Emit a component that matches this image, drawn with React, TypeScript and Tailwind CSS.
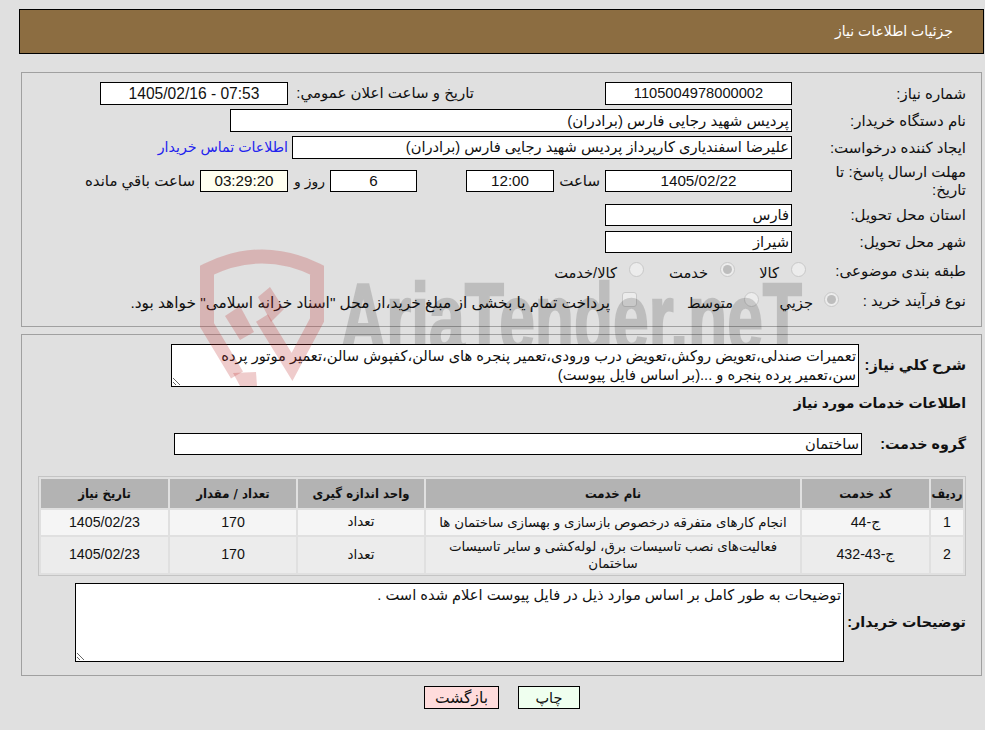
const Box = ({ w, children, center, bg, short, className }: { w: string; children?: React.ReactNode; center?: boolean; bg?: string; short?: boolean; className?: string }) => (
  <div className={`${w} ${bg ?? "bg-white"} ${center ? "text-center" : "text-right pr-[2px]"} ${short ? "h-[22px] leading-[20px]" : "h-[23px] leading-[21px]"} shrink-0 border border-black whitespace-nowrap overflow-hidden ${className ?? ""}`}>
    {children}
  </div>
);

const Label = ({ children }: { children: React.ReactNode }) => (
  <div className="w-[174px] shrink-0 pl-[8px] text-[15px] leading-[18px]">{children}</div>
);

const Radio = ({ on }: { on?: boolean }) => (
  <span className="relative top-[-2px] inline-flex h-[15px] w-[15px] shrink-0 items-center justify-center rounded-full border border-[#c8c8c8] bg-[#ececec]">
    {on && <span className="h-[9px] w-[9px] rounded-full bg-[#bdbdbd]" />}
  </span>
);

const rows = [
  { n: "1", code: "ج-44", name: "انجام کارهای متفرقه درخصوص بازسازی و بهسازی ساختمان ها", h: "h-[25px]" },
  { n: "2", code: "ج-43-432", name: "فعالیت‌های نصب تاسیسات برق، لوله‌کشی و سایر تاسیسات ساختمان", h: "h-[36px]" },
];

// watermark sits over the page, so it tints the boxes too
const Watermark = () => (
  <svg dir="ltr" className="pointer-events-none absolute left-0 top-0" width="985" height="730">
    <defs>
      <clipPath id="letters">
        <rect x="330" y="250" width="490" height="95" />
      </clipPath>
    </defs>
    <g fill="rgba(190,40,40,0.24)">
      <path d="M237 375 L207 325 L207 270 Q262 243 317 270 L317 320 L292 367 L262 318" fill="none" stroke="rgba(190,40,40,0.24)" strokeWidth="14" />
      <polygon points="225,316 240,306 254,332 240,340" />
      <polygon points="258,297 270,287 284,309 271,322" />
      <polygon points="233,373 256,372 257,386 240,386" />
    </g>
    <g clipPath="url(#letters)" opacity="0.15">
      <text x="340" y="352" direction="ltr" textLength="462" lengthAdjust="spacingAndGlyphs" fontFamily="Liberation Sans" fontWeight="700" fontSize="98" fill="#000" stroke="#000" strokeWidth="2.5">
        AriaTender.neT
      </text>
    </g>
  </svg>
);

export default function App() {
  return (
    <div dir="rtl" className="relative h-[730px] w-[985px] overflow-hidden bg-[#e0e0e0] font-['Liberation_Sans','DejaVu_Sans',sans-serif] text-[14.67px] text-[#111]">
      <div className="ml-[19px] mr-[1px] mt-[9px] flex h-[45px] items-center border border-black bg-[#8c6d41] pr-[30px] text-[14px] text-white">
        جزئیات اطلاعات نیاز
      </div>

      <section className="ml-[21px] mr-[3px] mt-[18px] h-[255px] border border-[#a0a0a0] pr-[15px] pt-[9px]">
        <div className="flex items-center">
          <Label>شماره نیاز:</Label>
          <Box w="w-[187px]" center>1105004978000002</Box>
          <div className="w-[131px] shrink-0" />
          <div className="w-[186px] shrink-0 whitespace-nowrap text-[15px]">تاریخ و ساعت اعلان عمومي:</div>
          <Box w="w-[188px]" center className="text-[15.6px]"><span dir="ltr">1405/02/16 - 07:53</span></Box>
        </div>
        <div className="mt-[4px] flex items-center">
          <Label>نام دستگاه خریدار:</Label>
          <Box w="w-[562px]" className="text-[15px]">پردیس شهید رجایی فارس (برادران)</Box>
        </div>
        <div className="mt-[4px] flex items-center">
          <Label>ایجاد کننده درخواست:</Label>
          <Box w="w-[500px]">علیرضا اسفندیاری کارپرداز پردیس شهید رجایی فارس (برادران)</Box>
          <span className="mr-[4px] whitespace-nowrap text-[14.2px] text-[#2222ee]">اطلاعات تماس خریدار</span>
        </div>
        <div className="mt-[4px] flex items-center">
          <Label>مهلت ارسال پاسخ: تا<br />تاریخ:</Label>
          <Box w="w-[187px]" short center className="text-[15.2px]">1405/02/22</Box>
          <div className="w-[51px] shrink-0 pr-[5px] text-[15px]">ساعت</div>
          <Box w="w-[88px]" short center className="text-[15.2px]">12:00</Box>
          <div className="w-[49px] shrink-0" />
          <Box w="w-[87px]" short center className="text-[15.2px]">6</Box>
          <div className="w-[42px] shrink-0 whitespace-nowrap pr-[5px] text-[14px]">روز و</div>
          <Box w="w-[88px]" short center bg="bg-[#fffff0]" className="text-[15.2px]">03:29:20</Box>
          <div className="mr-[5px] whitespace-nowrap text-[15px]">ساعت باقي مانده</div>
        </div>
        <div className="mt-[5px] flex items-center">
          <Label>استان محل تحویل:</Label>
          <Box w="w-[187px]" short>فارس</Box>
        </div>
        <div className="mt-[5px] flex items-center">
          <Label>شهر محل تحویل:</Label>
          <Box w="w-[187px]" short>شیراز</Box>
        </div>
        <div className="mt-[7px] flex h-[22px] items-center">
          <Label>طبقه بندی موضوعی:</Label>
          <div className="-mr-[14px] flex items-center">
            <Radio />
            <span className="relative top-[2px] mr-[12px] w-[44px] whitespace-nowrap">کالا</span>
            <Radio on />
            <span className="relative top-[2px] mr-[12px] w-[64px] whitespace-nowrap">خدمت</span>
            <Radio />
            <span className="relative top-[2px] mr-[12px] whitespace-nowrap">کالا/خدمت</span>
          </div>
        </div>
        <div className="mt-[8px] flex h-[22px] items-center">
          <Label>نوع فرآیند خرید :</Label>
          <div className="-mr-[47px] flex items-center">
            <Radio on />
            <span className="relative top-[2px] mr-[11px] w-[54px] whitespace-nowrap">جزیي</span>
            <Radio />
            <span className="relative top-[2px] mr-[11px] w-[96px] whitespace-nowrap">متوسط</span>
            <span className="relative top-[-2px] inline-block h-[15px] w-[15px] shrink-0 rounded-[3px] border border-[#c8c8c8] bg-[#ececec]" />
            <span className="relative top-[2px] mr-[12px] whitespace-nowrap text-[15.4px]">پرداخت تمام یا بخشی از مبلغ خرید،از محل "اسناد خزانه اسلامی" خواهد بود.</span>
          </div>
        </div>
      </section>

      <section className="ml-[21px] mr-[3px] mt-[7px] h-[342px] border border-[#a0a0a0] pr-[15px] pt-[9px]">
        <div className="flex items-center">
          <div className="w-[107px] shrink-0 whitespace-nowrap text-[14.6px] font-bold">شرح کلي نیاز:</div>
          <textarea
            readOnly
            rows={2}
            className="h-[43px] w-[688px] shrink-0 border border-black bg-white px-[2px] pt-[2px] leading-[19px] outline-none"
            defaultValue={"تعمیرات صندلی،تعویض روکش،تعویض درب ورودی،تعمیر پنجره های سالن،کفپوش سالن،تعمیر موتور پرده\nسن،تعمیر پرده پنجره و ...(بر اساس فایل پیوست)"}
          />
        </div>
        <div className="mt-[7px] h-[18px] text-[14px] leading-[18px] font-bold">اطلاعات خدمات مورد نیاز</div>
        <div className="mt-[21px] flex items-center">
          <div className="relative top-[1px] w-[104px] shrink-0 text-[14.3px] font-bold">گروه خدمت:</div>
          <Box w="w-[688px]" short>ساختمان</Box>
        </div>
        <table className="mt-[21px] w-[928px] table-fixed border-separate border-spacing-[2px] border border-[#c4c4c4] text-center text-[14.2px]">
          <thead className="font-['DejaVu_Sans_Condensed','DejaVu_Sans',sans-serif] text-[13px]">
            <tr className="h-[29px] bg-[#b3b3b3] font-bold">
              <th className="w-[32px] p-0">ردیف</th>
              <th className="w-[127px] p-0">کد خدمت</th>
              <th className="w-[374px] p-0">نام خدمت</th>
              <th className="w-[126px] p-0">واحد اندازه گیری</th>
              <th className="w-[126px] p-0">تعداد / مقدار</th>
              <th className="p-0">تاریخ نیاز</th>
            </tr>
          </thead>
          <tbody>
            {rows.map((r, i) => (
              <tr key={r.n} className={`${r.h} ${i === 0 ? "bg-[#f5f5f5]" : "bg-[#ececec]"}`}>
                <td className="p-0">{r.n}</td>
                <td className="p-0">{r.code}</td>
                <td className="px-[8px] py-0 text-[13.4px] leading-[17px]">{r.name}</td>
                <td className="p-0 text-[13.4px]">تعداد</td>
                <td className="p-0">170</td>
                <td className="p-0">1405/02/23</td>
              </tr>
            ))}
          </tbody>
        </table>
        <div className="mt-[7px] flex items-center">
          <div className="w-[122px] shrink-0 whitespace-nowrap text-[14.3px] font-bold">توضیحات خریدار:</div>
          <textarea
            readOnly
            className="h-[79px] w-[769px] shrink-0 border border-black bg-white px-[2px] pt-[2px] leading-[19px] outline-none"
            defaultValue="توضیحات به طور کامل بر اساس موارد ذیل در فایل پیوست اعلام شده است ."
          />
        </div>
      </section>

      <div className="mr-[405px] mt-[10px] flex">
        <button className="h-[23px] w-[62px] border border-black bg-[#efffef] text-[14.5px] leading-[20px]">چاپ</button>
        <button className="mr-[19px] h-[23px] w-[75px] border border-black bg-[#ffdcdc] text-[15.5px] leading-[20px]">بازگشت</button>
      </div>

      <Watermark />
    </div>
  );
}
